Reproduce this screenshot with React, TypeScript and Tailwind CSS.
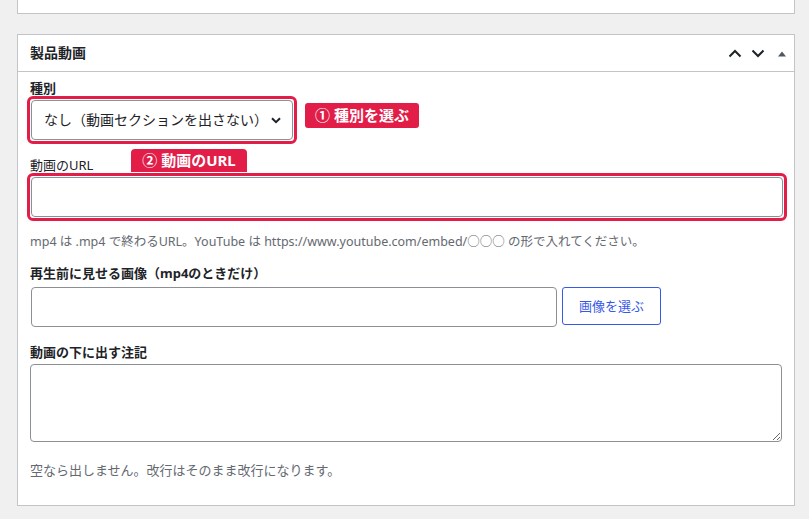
import React from "react";

const FONT = '"Noto Sans", "Noto Sans CJK JP", sans-serif';

export default function App() {
  return (
    <div
      className="w-[809px] h-[519px] bg-[#f0f0f1] pl-[17px] pr-[14px] overflow-hidden text-[#1d2327]"
      style={{ fontFamily: FONT }}
    >
      <div className="h-[14px] bg-white border-x border-b border-[#c3c4c7]" />
      <div className="mt-[20px] bg-white border border-[#c3c4c7]">
        <div className="h-[37px] border-b border-[#c3c4c7] flex items-center pl-[12px] pr-[8px]">
          <h2 className="flex-1 text-[14px] font-bold leading-[20px]">製品動画</h2>
          <svg width="14" height="9" viewBox="0 0 14 9" className="mt-[1px]">
            <path d="M1.5 7.5 L7 2 L12.5 7.5" fill="none" stroke="#1d2327" strokeWidth="2" />
          </svg>
          <svg width="14" height="9" viewBox="0 0 14 9" className="ml-[9px] mt-[1px]">
            <path d="M1.5 1.5 L7 7 L12.5 1.5" fill="none" stroke="#1d2327" strokeWidth="2" />
          </svg>
          <svg width="8" height="6" viewBox="0 0 8 6" className="ml-[13px] mt-[2px]">
            <path d="M0 5.5 L4 0.5 L8 5.5 Z" fill="#50575e" />
          </svg>
        </div>
        <div className="pl-[12px] pr-[12px] pt-[8px] pb-[27px]">
          <div className="text-[13px] font-bold leading-[16px]">種別</div>
          <div className="flex items-start ml-[-3px]">
            <div className="w-[270px] h-[48px] border-[3px] border-[#e11d48] rounded-[6px] p-[1px]">
              <div className="h-[40px] w-full border border-[#8c8f94] rounded-[4px] flex items-center pl-[12px] pr-[11px]">
                <span className="flex-1 text-[14px] leading-[20px] whitespace-nowrap">
                  なし（動画セクションを出さない）
                </span>
                <svg width="10" height="7" viewBox="0 0 10 7">
                  <path d="M1 1.2 L5 5.2 L9 1.2" fill="none" stroke="#1d2327" strokeWidth="2" />
                </svg>
              </div>
            </div>
            <div className="ml-[8px] mt-[7px] h-[25px] px-[10px] bg-[#e11d48] text-white rounded-[3px] flex items-center text-[15px] font-bold whitespace-nowrap leading-none">
              ① 種別を選ぶ
            </div>
          </div>

          <div className="relative mt-[13px]">
            <div className="text-[13px] leading-[16px]">動画のURL</div>
            <div className="absolute top-[-8px] left-[101px] h-[23px] w-[116px] bg-[#e11d48] text-white rounded-t-[4px] flex items-center justify-center text-[15px] font-bold whitespace-nowrap leading-none">
              ② 動画のURL
            </div>
            <div className="ml-[-3px] w-[760px] h-[48px] border-[3px] border-[#e11d48] rounded-[6px] p-[1px]">
              <div className="h-[40px] w-full border border-[#8c8f94] rounded-[4px] bg-white" />
            </div>
          </div>

          <p className="mt-[12px] h-[16px] text-[12.5px] leading-[16px] text-[#646970] whitespace-nowrap">
            mp4 は .mp4 で終わるURL。YouTube は https://www.youtube.com/embed/
            <span style={{ fontFamily: '"Noto Sans CJK JP", sans-serif' }}>○○○</span> の形で入れてください。
          </p>

          <div className="mt-[16px] text-[13px] font-bold leading-[16px]">再生前に見せる画像（mp4のときだけ）</div>
          <div className="mt-[6px] flex items-start">
            <div className="ml-[1px] w-[526px] h-[40px] border border-[#8c8f94] rounded-[4px]" />
            <button className="ml-[5px] w-[99px] h-[38px] border border-[#3858e9] rounded-[3px] bg-white text-[#3858e9] text-[13px] leading-none">
              画像を選ぶ
            </button>
          </div>

          <div className="mt-[17px] text-[13px] font-bold leading-[16px]">動画の下に出す注記</div>
          <textarea className="mt-[4px] block w-[752px] h-[78px] border border-[#8c8f94] rounded-[4px] resize-y" />

          <p className="mt-[20px] text-[13px] leading-[16px] text-[#646970] whitespace-nowrap">
            空なら出しません。改行はそのまま改行になります。
          </p>
        </div>
      </div>
    </div>
  );
}
